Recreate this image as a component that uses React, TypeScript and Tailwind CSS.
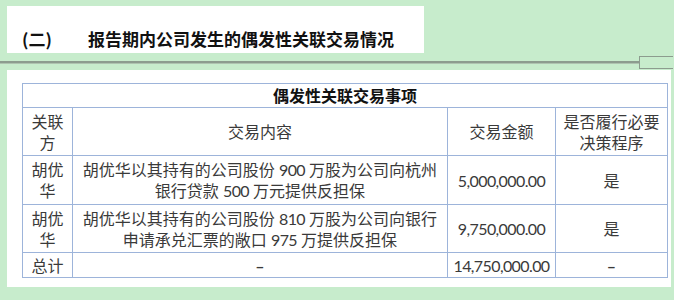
import React from "react";

const N = ({ children }: { children: React.ReactNode }) => (
  <span className="text-[16px] tracking-[-0.6px]">{children}</span>
);

export default function App() {
  const cell = "border border-[#9db4da] text-center align-middle p-0";
  return (
    <div
      className="w-[674px] h-[300px] bg-[#c7eccc] overflow-hidden"
      style={{ fontFamily: 'Lato, "Noto Sans CJK SC", sans-serif' }}
    >
      <div className="pt-[6px] pl-[7px]">
        <div
          className="w-[417px] h-[47px] bg-white pt-[23px] pl-[15px] flex text-[17px] leading-[20px] font-bold text-[#111]"
          style={{ fontFamily: '"Noto Sans CJK SC", sans-serif' }}
        >
          <span className="w-[66px]">(二)</span>
          <span>报告期内公司发生的偶发性关联交易情况</span>
        </div>
      </div>
      <div className="mt-[3px] flex items-start h-[13px]">
        <div className="mt-[5px] w-[639px] h-[2px] bg-[#8c9c8e] shadow-[0_1px_0_#aec3b0]" />
        <div className="w-[34px] h-[13px] border-l border-t border-b border-[#8c9c8e]" />
      </div>
      <div className="mt-[1px] ml-[7px] w-[664px] h-[217px] bg-white pt-[13px] pl-[15px]">
        <table className="border-collapse table-fixed w-[645px] text-[16px] text-[#3a3a3a] leading-[21px]">
          <colgroup>
            <col className="w-[50px]" />
            <col className="w-[375px]" />
            <col className="w-[108px]" />
            <col className="w-[112px]" />
          </colgroup>
          <tbody>
            <tr className="h-[24px]">
              <td colSpan={4} className={`${cell} font-bold text-[#111]`}>
                偶发性关联交易事项
              </td>
            </tr>
            <tr className="h-[48px]">
              <td className={cell}>
                关联
                <br />方
              </td>
              <td className={cell}>交易内容</td>
              <td className={cell}>交易金额</td>
              <td className={cell}>
                是否履行必要
                <br />
                决策程序
              </td>
            </tr>
            <tr className="h-[49px]">
              <td className={cell}>
                胡优
                <br />华
              </td>
              <td className={`${cell} whitespace-nowrap`}>
                胡优华以其持有的公司股份 <N>900</N> 万股为公司向杭州
                <br />
                银行贷款 <N>500</N> 万元提供反担保
              </td>
              <td className={cell}>
                <N>5,000,000.00</N>
              </td>
              <td className={cell}>是</td>
            </tr>
            <tr className="h-[48px]">
              <td className={cell}>
                胡优
                <br />华
              </td>
              <td className={`${cell} whitespace-nowrap`}>
                胡优华以其持有的公司股份 <N>810</N> 万股为公司向银行
                <br />
                申请承兑汇票的敞口 <N>975</N> 万提供反担保
              </td>
              <td className={cell}>
                <N>9,750,000.00</N>
              </td>
              <td className={cell}>是</td>
            </tr>
            <tr className="h-[25px]">
              <td className={cell}>总计</td>
              <td className={`${cell} font-bold`}>–</td>
              <td className={cell}>
                <N>14,750,000.00</N>
              </td>
              <td className={`${cell} font-bold`}>–</td>
            </tr>
          </tbody>
        </table>
      </div>
    </div>
  );
}
